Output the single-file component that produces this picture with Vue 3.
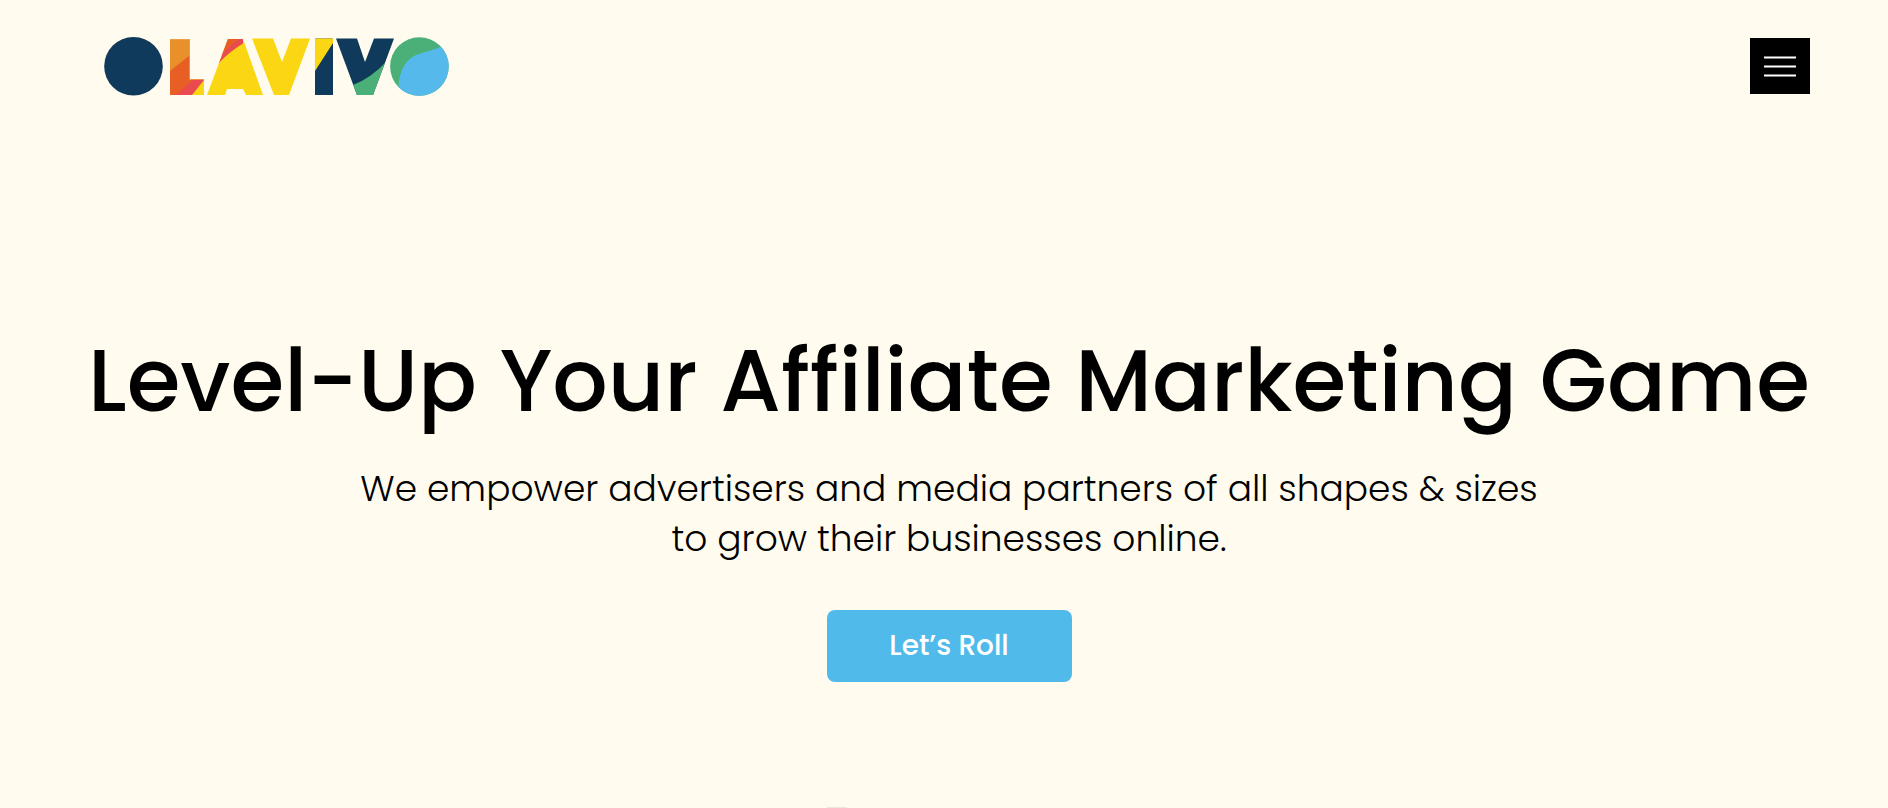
<script setup>
const headline = 'Level-Up Your Affiliate Marketing Game'
</script>

<template>
  <div class="page">
    <header class="bar">
      <a class="brand" href="#" aria-label="Olavivo home">
        <svg class="logo" viewBox="104 37 345 58" aria-hidden="true">
          <defs>
            <clipPath id="clip-l"><path d="M170 39H190V79H204V95H170Z" /></clipPath>
            <clipPath id="clip-a"><path d="M207 95L228 39H243L263 95H246L243 89H227L225 95Z" /></clipPath>
            <clipPath id="clip-v"><path d="M336 38.5H357L365 62L374 38.5H394L373 95H357Z" /></clipPath>
            <clipPath id="clip-o"><circle cx="419.4" cy="66.5" r="29.3" /></clipPath>
          </defs>
          <circle cx="133.5" cy="66.3" r="29.3" fill="#0f3a5b" />
          <g clip-path="url(#clip-l)">
            <path d="M170 39H204V95H170Z" fill="#e85f25" />
            <path d="M170 39H190V55L170 71Z" fill="#e8912b" />
            <path d="M176 95L194 79H204V95Z" fill="#e94b50" />
            <path d="M192 95L204 80V95Z" fill="#fbd613" />
            <path d="M170 39H190V79H204" fill="none" stroke="#f0a64c" stroke-width="1.4" />
          </g>
          <g clip-path="url(#clip-a)">
            <path d="M207 39H263V95H207Z" fill="#fbd613" />
            <path d="M207 39H243V43.5Q229 52 219 63L207 70Z" fill="#e94b50" />
            <path d="M207 39H239Q229 46 221 56L207 62Z" fill="#e85f25" />
          </g>
          <path d="M252 38.5H273L282 62L291 38.5H310L289 95H274Z" fill="#fbd613" />
          <path d="M315 38.5H333V95H315Z" fill="#0f3a5b" />
          <path d="M315 38.5H333V43L315 71Z" fill="#fbd613" />
          <g clip-path="url(#clip-v)">
            <path d="M336 38H394V95H336Z" fill="#0f3a5b" />
            <path d="M353 85Q371 78 386 62L394 95H353Z" fill="#4bb077" />
          </g>
          <g clip-path="url(#clip-o)">
            <path d="M390 37H449V96H390Z" fill="#4bb077" />
            <path d="M398.5 88C399 70 406 58 419 54C428 51 434 50 441 46.5L452 50V98H398Z" fill="#56b9ec" />
          </g>
        </svg>
      </a>
      <button class="menu" type="button" aria-label="Open menu">
        <svg class="menu-icon" viewBox="0 0 32 22" aria-hidden="true">
          <path d="M0 2.5H32M0 11.5H32M0 20.5H32" stroke="#fff" stroke-width="2" />
        </svg>
      </button>
    </header>

    <main class="hero">
      <h1>{{ headline }}</h1>
      <p>We empower advertisers and media partners of all shapes &amp; sizes<br />to grow their businesses online.</p>
      <a class="cta" href="#">Let’s Roll</a>
      <span class="mark" aria-hidden="true"></span>
    </main>
  </div>
</template>

<style>
html,
body {
  background: #fffbee;
}
</style>

<style scoped>
.page {
  min-height: 100vh;
  box-sizing: border-box;
  padding: 37px 70px 0 80px;
  background: #fffbee;
  color: #000;
  font-family: Poppins, Inter, sans-serif;
}
.bar {
  display: flex;
  align-items: center;
  justify-content: space-between;
  padding: 0 8px 0 24px;
}
.brand,
.logo {
  display: block;
}
.logo {
  width: 345px;
  height: 58px;
  overflow: visible;
}
.menu {
  display: flex;
  align-items: center;
  justify-content: center;
  width: 60px;
  height: 56px;
  padding: 0;
  border: 0;
  background: #000;
  cursor: pointer;
}
.menu-icon {
  width: 32px;
  height: 22px;
}
.hero {
  display: flex;
  flex-direction: column;
  align-items: center;
  padding-top: 233px;
  text-align: center;
}
h1 {
  margin: 0;
  font-size: 87px;
  font-weight: 500;
  line-height: 106px;
}
p {
  margin: 30px 0 0;
  font-size: 36px;
  font-weight: 300;
  line-height: 50px;
}
.cta {
  display: flex;
  align-items: center;
  justify-content: center;
  box-sizing: border-box;
  min-width: 245px;
  height: 72px;
  margin-top: 46px;
  padding: 0 48px;
  border-radius: 8px;
  background: #50baeb;
  color: #fff;
  font-size: 28px;
  font-weight: 500;
  text-decoration: none;
}
.mark {
  width: 20px;
  height: 1px;
  margin-top: 125px;
  margin-right: 224px;
  background: #eae7db;
}
</style>
